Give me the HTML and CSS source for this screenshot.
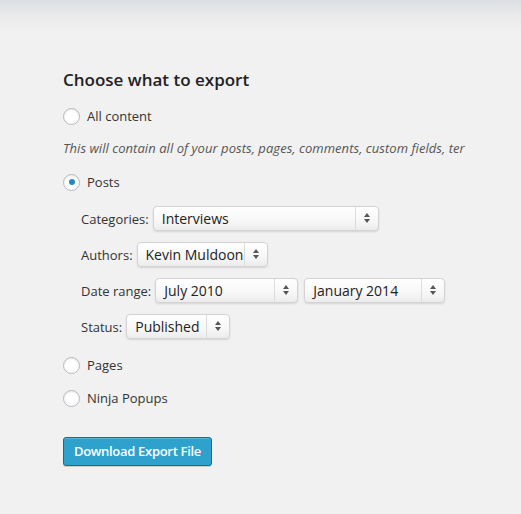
FILE: index.html
```html
<!DOCTYPE html>
<html>
	<head>
		<title>Export</title>
		<link rel="stylesheet" href="styles.css">
	</head>
<body>
	<div class="wrap">
		<h2 class="title">Choose what to export</h2>

		<!-- Export type choices -->
		<div class="choice">
			<span class="radio"></span>
			<span>All content</span>
		</div>
		<p class="hint">This will contain all of your posts, pages, comments, custom fields, ter</p>

		<div class="choice choice-posts">
			<span class="radio checked"></span>
			<span>Posts</span>
		</div>

		<!-- Post filters -->
		<ul class="filters">
			<li class="filter">
				<span class="label">Categories:</span>
				<span class="select w-cat"><span class="value">Interviews</span><span class="arrows"></span></span>
			</li>
			<li class="filter">
				<span class="label">Authors:</span>
				<span class="select w-author"><span class="value">Kevin Muldoon</span><span class="arrows"></span></span>
			</li>
			<li class="filter">
				<span class="label">Date range:</span>
				<span class="select w-start"><span class="value">July 2010</span><span class="arrows"></span></span>
				<span class="select w-end"><span class="value">January 2014</span><span class="arrows"></span></span>
			</li>
			<li class="filter">
				<span class="label">Status:</span>
				<span class="select w-status"><span class="value">Published</span><span class="arrows"></span></span>
			</li>
		</ul>

		<div class="choice choice-pages">
			<span class="radio"></span>
			<span>Pages</span>
		</div>
		<div class="choice choice-ninja">
			<span class="radio"></span>
			<span>Ninja Popups</span>
		</div>

		<a href="#" class="button">Download Export File</a>
	</div>
</body>
</html>
```

FILE: styles.css
```css
body {
	margin: 0px;
	padding: 0px;
	font-family: 'Open Sans', 'Liberation Sans', sans-serif;
	font-size: 13px;
	color: #444;
	background: #f1f1f1 linear-gradient(to bottom, #dcdfe2 0px, #e9e9ea 14px, #f1f1f1 32px) no-repeat;
	min-height: 514px;
}
.wrap {
	padding: 68px 0 0 63px;
}
.title {
	margin: 0;
	font-size: 17px;
	font-weight: 600;
	line-height: 24px;
	color: #222;
}
.choice {
	display: flex;
	align-items: center;
	height: 20px;
	margin-top: 14px;
	color: #333;
}
.choice-pages { margin-top: 16px; }
.choice-ninja { margin-top: 13px; }
.radio {
	width: 15px;
	height: 15px;
	margin-right: 7px;
	border: 1px solid #b4b9be;
	border-radius: 50%;
	background: #fff;
	box-shadow: inset 0 1px 2px rgba(0, 0, 0, 0.1);
	display: flex;
	align-items: center;
	justify-content: center;
}
.radio.checked::before {
	content: "";
	width: 6px;
	height: 6px;
	border-radius: 50%;
	background: #1e8cbe;
}
.hint {
	margin: 12px 0 0 0;
	line-height: 20px;
	font-style: italic;
	color: #555;
	white-space: nowrap;
	letter-spacing: 0.05px;
}
.filters {
	list-style: none;
	margin: 14px 0 0 0;
	padding: 0 0 0 18px;
	display: flex;
	flex-direction: column;
	gap: 11px;
}
.filter {
	display: flex;
	align-items: center;
	height: 25px;
	color: #333;
}
.label {
	margin-right: 4px;
}
.select {
	display: flex;
	align-items: stretch;
	height: 25px;
	margin-right: 6px;
	box-sizing: border-box;
	border: 1px solid #d3d3d3;
	border-radius: 4px;
	background: linear-gradient(to bottom, #ffffff 0%, #f7f7f7 60%, #ececec 100%);
	box-shadow: 0 1px 2px rgba(0, 0, 0, 0.12);
	font-size: 14px;
	color: #222;
}
.select .value {
	flex: 1;
	padding-left: 8px;
	line-height: 23px;
	white-space: nowrap;
	overflow: hidden;
}
.select .arrows {
	width: 22px;
	flex: none;
	border-left: 1px solid #dcdcdc;
	position: relative;
}
/* little up/down carets in the arrow box */
.select .arrows::before,
.select .arrows::after {
	content: "";
	position: absolute;
	left: 8px;
	border-left: 3px solid transparent;
	border-right: 3px solid transparent;
}
.select .arrows::before {
	top: 6px;
	border-bottom: 4px solid #555;
}
.select .arrows::after {
	top: 12px;
	border-top: 4px solid #555;
}
.w-cat { width: 226px; }
.w-author { width: 131px; }
.w-start { width: 143px; }
.w-end { width: 141px; }
.w-status { width: 104px; }
.button {
	display: inline-block;
	margin-top: 29px;
	height: 29px;
	padding: 0;
	box-sizing: border-box;
	width: 149px;
	text-align: center;
	line-height: 27px;
	font-size: 13px;
	font-weight: 600;
	letter-spacing: -0.3px;
	white-space: nowrap;
	color: #fff;
	text-decoration: none;
	background: #2ea2cc;
	border: 1px solid #0074a2;
	border-radius: 3px;
	box-shadow: inset 0 1px 0 rgba(120, 200, 230, 0.5), 0 1px 0 rgba(0, 0, 0, 0.15);
}
```
